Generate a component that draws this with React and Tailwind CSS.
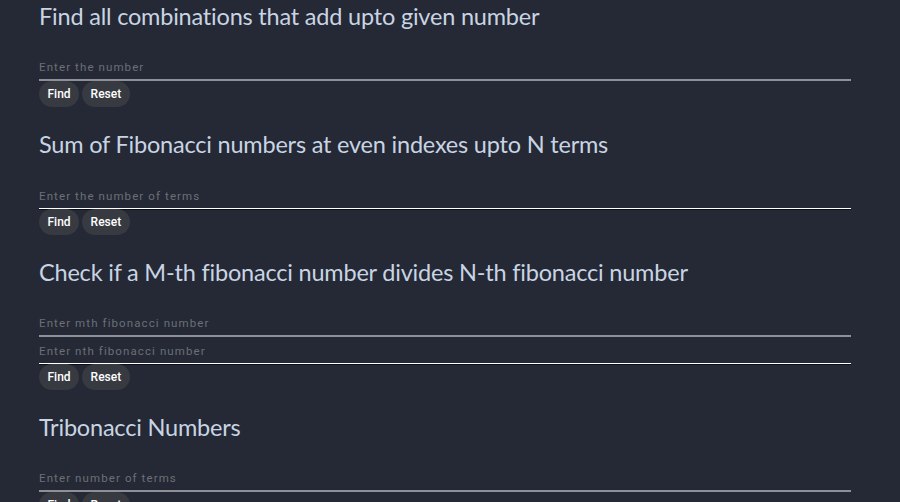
const sections = [
  { title: 'Find all combinations that add upto given number', inputs: [{ ph: 'Enter the number', focus: false }] },
  { title: 'Sum of Fibonacci numbers at even indexes upto N terms', inputs: [{ ph: 'Enter the number of terms', focus: true }] },
  {
    title: 'Check if a M-th fibonacci number divides N-th fibonacci number',
    inputs: [
      { ph: 'Enter mth fibonacci number', focus: false },
      { ph: 'Enter nth fibonacci number', focus: true },
    ],
  },
  { title: 'Tribonacci Numbers', inputs: [{ ph: 'Enter number of terms', focus: false }] },
];

const Field = ({ ph, focus }) => (
  <div
    className={
      focus
        ? 'h-[27px] flex items-center border-b border-white shadow-[0_1px_0_#0b0f19]'
        : 'h-[27px] flex items-center border-b-2 border-[#8d9097]'
    }
  >
    <input
      placeholder={ph}
      className="w-full bg-transparent outline-none text-[11.5px] tracking-[1.1px] text-[#c9d3e2] placeholder:text-[#6c6f76] font-['Roboto',sans-serif] pt-[3px]"
    />
  </div>
);

const Section = ({ title, inputs }) => (
  <div>
    <h2 className="h-[33px] flex items-center text-[23.5px] text-[#c9d4e3] font-['Lato',sans-serif] tracking-[-0.2px]">
      {title}
    </h2>
    <div className="pt-[21px] w-[812px]">
      {inputs.map((f, i) => (
        <Field key={i} {...f} />
      ))}
    </div>
    <div className="flex gap-[3px]">
      <button className="h-[26px] px-[8.5px] rounded-full bg-[#373a41] text-white text-[12px] font-medium font-['Roboto',sans-serif]">
        Find
      </button>
      <button className="h-[26px] px-[8.5px] rounded-full bg-[#373a41] text-white text-[12px] font-medium font-['Roboto',sans-serif]">
        Reset
      </button>
    </div>
  </div>
);

export default function App() {
  return (
    <div className="bg-[#242935] px-[39px] overflow-hidden h-[502px]">
      {sections.map((s, i) => (
        <div key={i} className={i === 2 ? 'h-[155px]' : 'h-[128px]'}>
          <Section {...s} />
        </div>
      ))}
    </div>
  );
}
